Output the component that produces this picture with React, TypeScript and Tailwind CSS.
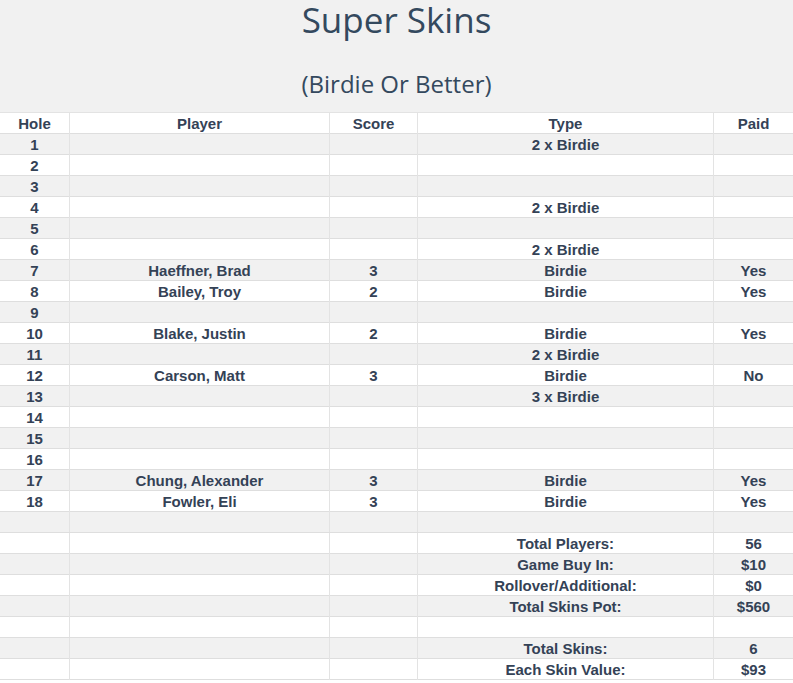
import React from 'react';

type Row = { hole?: string; player?: string; score?: string; type?: string; paid?: string };

const holes: Row[] = [
  { hole: '1', type: '2 x Birdie' },
  { hole: '2' },
  { hole: '3' },
  { hole: '4', type: '2 x Birdie' },
  { hole: '5' },
  { hole: '6', type: '2 x Birdie' },
  { hole: '7', player: 'Haeffner, Brad', score: '3', type: 'Birdie', paid: 'Yes' },
  { hole: '8', player: 'Bailey, Troy', score: '2', type: 'Birdie', paid: 'Yes' },
  { hole: '9' },
  { hole: '10', player: 'Blake, Justin', score: '2', type: 'Birdie', paid: 'Yes' },
  { hole: '11', type: '2 x Birdie' },
  { hole: '12', player: 'Carson, Matt', score: '3', type: 'Birdie', paid: 'No' },
  { hole: '13', type: '3 x Birdie' },
  { hole: '14' },
  { hole: '15' },
  { hole: '16' },
  { hole: '17', player: 'Chung, Alexander', score: '3', type: 'Birdie', paid: 'Yes' },
  { hole: '18', player: 'Fowler, Eli', score: '3', type: 'Birdie', paid: 'Yes' },
  {},
  { type: 'Total Players:', paid: '56' },
  { type: 'Game Buy In:', paid: '$10' },
  { type: 'Rollover/Additional:', paid: '$0' },
  { type: 'Total Skins Pot:', paid: '$560' },
  {},
  { type: 'Total Skins:', paid: '6' },
  { type: 'Each Skin Value:', paid: '$93' },
];

const row = 'grid h-[21px] grid-cols-[69px_260px_88px_296px_1fr] border-b border-[#dedede] pt-[1px] text-center leading-[20px]';
const divider = 'border-l border-[#e3e3e3] -mt-[1px] pt-[1px]';

function TableRow({ r, bg }: { r: Row; bg: string }) {
  return (
    <div className={`${row} ${bg}`}>
      <div>{r.hole}</div>
      <div className={divider}>{r.player}</div>
      <div className={divider}>{r.score}</div>
      <div className={divider}>{r.type}</div>
      <div className={divider}>{r.paid}</div>
    </div>
  );
}

export default function App() {
  return (
    <div className="min-h-screen bg-white font-['Liberation_Sans',sans-serif] text-[#344256]">
      <header className="flex h-[112px] flex-col items-center bg-[#f1f1f1] font-['Open_Sans',sans-serif]">
        <h1 className="text-[35px] leading-[40px] text-[#34495e]">Super Skins</h1>
        <h2 className="mt-[26px] text-[24px] leading-[36px] text-[#34495e]">(Birdie Or Better)</h2>
      </header>

      <div className="border-t border-[#e3e3e3] text-[15px] font-bold">
        <TableRow r={{ hole: 'Hole', player: 'Player', score: 'Score', type: 'Type', paid: 'Paid' }} bg="bg-white" />
        {holes.map((r, i) => (
          <TableRow key={i} r={r} bg={i % 2 === 0 ? 'bg-[#f1f1f1]' : 'bg-white'} />
        ))}
      </div>
    </div>
  );
}
